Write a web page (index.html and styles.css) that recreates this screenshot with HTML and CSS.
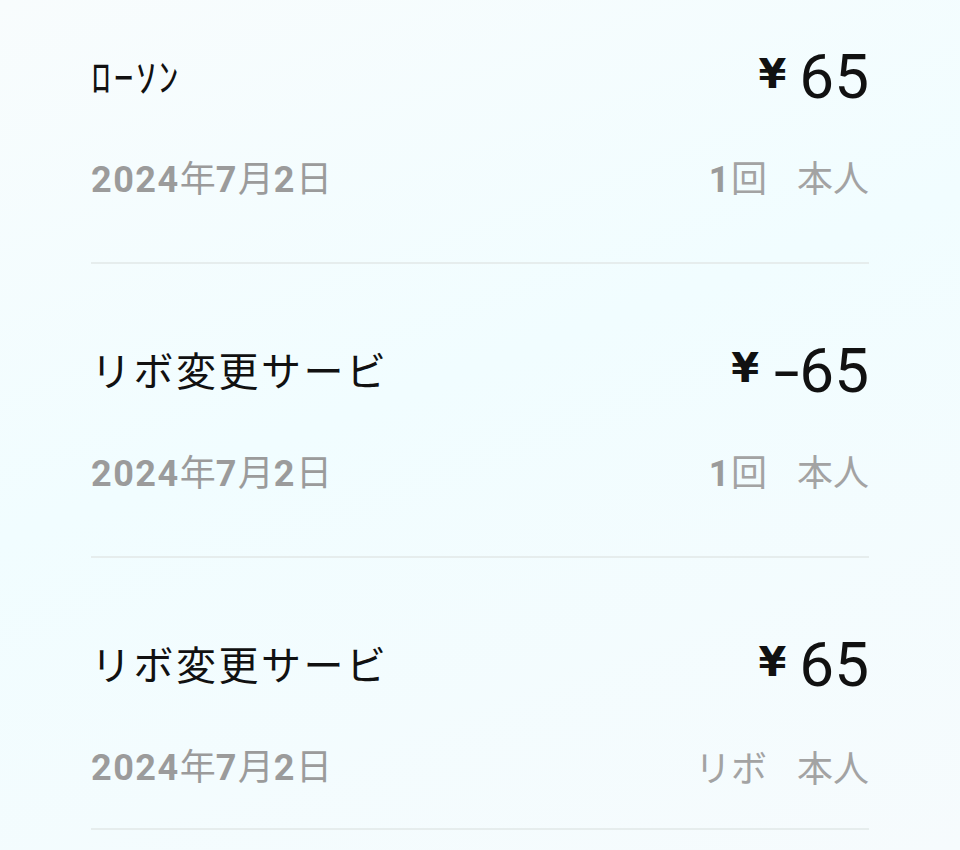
FILE: index.html
```html
<!DOCTYPE html>
<html lang="ja">
<head>
  <meta charset="UTF-8">
  <meta name="viewport" content="width=device-width, initial-scale=1.0">
  <title>ご利用明細</title>
  <link rel="stylesheet" href="styles.css">
</head>
<body>
  <div class="list">
    <div class="item">
      <div class="item-top">
        <span class="shop">ﾛｰｿﾝ</span>
        <span class="amount"><span class="yen">¥</span>65</span>
      </div>
      <div class="item-bottom">
        <span class="date"><span class="num">2024</span>年<span class="num">7</span>月<span class="num">2</span>日</span>
        <span class="meta"><span><span class="num">1</span>回</span><span>本人</span></span>
      </div>
    </div>

    <div class="item">
      <div class="item-top">
        <span class="shop">リボ変更サービ</span>
        <span class="amount"><span class="yen">¥</span><span class="minus">-</span>65</span>
      </div>
      <div class="item-bottom">
        <span class="date"><span class="num">2024</span>年<span class="num">7</span>月<span class="num">2</span>日</span>
        <span class="meta"><span><span class="num">1</span>回</span><span>本人</span></span>
      </div>
    </div>

    <div class="item">
      <div class="item-top">
        <span class="shop">リボ変更サービ</span>
        <span class="amount"><span class="yen">¥</span>65</span>
      </div>
      <div class="item-bottom">
        <span class="date"><span class="num">2024</span>年<span class="num">7</span>月<span class="num">2</span>日</span>
        <span class="meta"><span>リボ</span><span>本人</span></span>
      </div>
    </div>
  </div>
</body>
</html>
```

FILE: styles.css
```css
html, body {
  height: 100%;
}
body {
  margin: 0;
  padding: 0 91px;
  overflow: hidden;
  font-family: Roboto, "Noto Sans CJK JP", sans-serif;
  color: #111;
  background: linear-gradient(160deg, #f8fcfd 0%, #f1fdff 45%, #f6fbfd 100%);
}
/* list is scrolled a little, first row sits partly above the top */
.list {
  margin-top: -30px;
}
.item {
  padding: 80px 0 64px;
  border-bottom: 2px solid #e6eded;
}
.item:last-child {
  padding-bottom: 42px;
}
.item-top {
  display: flex;
  justify-content: space-between;
  align-items: center;
  height: 50px;
}
.shop {
  font-family: "Noto Sans CJK JP", sans-serif;
  font-size: 40px;
  letter-spacing: 2.5px;
  line-height: 50px;
}
.amount {
  font-size: 62px;
  line-height: 50px;
  white-space: nowrap;
}
.yen {
  font-family: "DejaVu Sans", sans-serif;
  font-size: 40px;
  font-weight: bold;
  margin-right: 13px;
  vertical-align: 10px;
}
.minus {
  display: inline-block;
  margin: 0 4px 0 6px;
  transform: scaleX(1.5);
}
.item-bottom {
  display: flex;
  justify-content: space-between;
  align-items: center;
  margin-top: 58px;
  height: 40px;
  color: #9b9b9b;
  font-size: 36px;
}
.date, .meta {
  font-family: "Noto Sans CJK JP", sans-serif;
  line-height: 40px;
}
.meta {
  display: flex;
  gap: 30px;
  color: #a3a3a3;
}
.num {
  font-family: Roboto, sans-serif;
  font-weight: bold;
  letter-spacing: 1.5px;
  color: #9b9b9b;
}
```
